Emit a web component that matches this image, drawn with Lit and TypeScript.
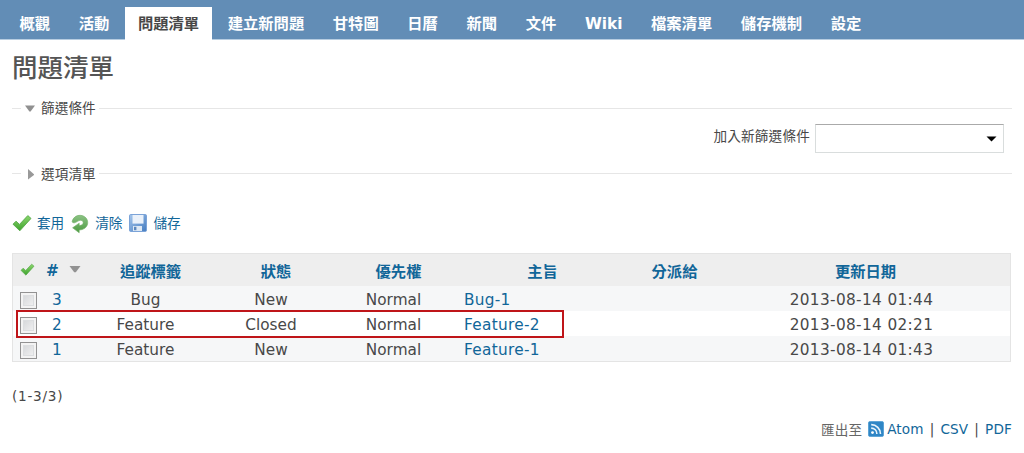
import { LitElement, html, css, svg } from "lit";
import { customElement } from "lit/decorators.js";
import { classMap } from "lit/directives/class-map.js";

interface Issue {
  id: number;
  tracker: string;
  status: string;
  priority: string;
  subject: string;
  updated: string;
}

const TABS = ["概觀", "活動", "問題清單", "建立新問題", "甘特圖", "日曆", "新聞", "文件", "Wiki", "檔案清單", "儲存機制", "設定"];
const ACTIVE_TAB = "問題清單";

const ISSUES: Issue[] = [
  { id: 3, tracker: "Bug", status: "New", priority: "Normal", subject: "Bug-1", updated: "2013-08-14 01:44" },
  { id: 2, tracker: "Feature", status: "Closed", priority: "Normal", subject: "Feature-2", updated: "2013-08-14 02:21" },
  { id: 1, tracker: "Feature", status: "New", priority: "Normal", subject: "Feature-1", updated: "2013-08-14 01:43" },
];

const gradients = svg`
  <defs>
    <linearGradient id="g" x1="0" y1="0" x2="0" y2="1"><stop offset="0" stop-color="#8bd66c"/><stop offset="1" stop-color="#3fa32f"/></linearGradient>
    <linearGradient id="r" x1="0" y1="0" x2="0" y2="1"><stop offset="0" stop-color="#8cc284"/><stop offset="1" stop-color="#4b9a40"/></linearGradient>
    <linearGradient id="b" x1="0" y1="0" x2="1" y2="1"><stop offset="0" stop-color="#a5c6ec"/><stop offset="1" stop-color="#457cc0"/></linearGradient>
  </defs>`;

const checkIcon = html`<svg class="ico" viewBox="0 0 20 18">${gradients}
  <path d="M1 10.2 L4 7.2 L7.5 10.4 L15.8 1.6 L19 4.4 L7.8 16.8 Z" fill="url(#g)" stroke="#55a848" stroke-width=".9" stroke-linejoin="round"/>
</svg>`;

const reloadIcon = html`<svg class="reload" viewBox="0 0 18 20">${gradients}
  <path d="M1.2 7.2 C2.6 2.4 7 .6 11 1.6 C15 2.6 17.2 6 16.6 9.8 C16 13.4 12.6 15.8 8.2 16 L8.2 18.8 L1.6 13.8 L8.2 9.2 L8.2 11.6 C10.6 11.6 12.2 10.4 12.2 8.6 C12.2 6.6 10 5.8 8 6.6 C6.4 7.2 5 8.6 3.4 8.8 C2 8.9 1 8.2 1.2 7.2 Z" fill="url(#r)" stroke="#6bad62" stroke-width=".6" stroke-linejoin="round"/>
</svg>`;

const saveIcon = html`<svg class="save" viewBox="0 0 18 18">${gradients}
  <rect x=".5" y=".5" width="17" height="17" rx="1.3" fill="url(#b)" stroke="#7ba3d8"/>
  <rect x="3.5" y="1" width="11" height="8.6" fill="#eaf1fa"/>
  <rect x="4" y="12" width="9" height="5" fill="#dde8f4"/>
  <rect x="5" y="12.8" width="2.4" height="3.4" fill="#5d88bd"/>
</svg>`;

const feedIcon = html`<svg class="feed" viewBox="0 0 16 16">
  <rect x=".4" y=".4" width="15.2" height="15.2" rx="1.8" fill="#2f86c6" stroke="#4b9ad2" stroke-width=".8"/>
  <circle cx="4.5" cy="11.6" r="1.4" fill="#fff"/>
  <path d="M3.2 7.1 A5.7 5.7 0 0 1 8.9 12.9 M3.2 3.6 A9.3 9.3 0 0 1 12.5 12.9" fill="none" stroke="#e9f4fc" stroke-width="1.6"/>
</svg>`;

@customElement("app-root")
export class AppRoot extends LitElement {
  static styles = css`
    :host {
      display: block;
      height: 453px;
      overflow: hidden;
      background: #fff;
      color: #484848;
      font-family: "DejaVu Sans", "Noto Sans CJK TC", sans-serif;
      font-size: 13.6px;
    }
    * { box-sizing: border-box; }
    a { color: #116699; text-decoration: none; }
    svg { display: block; flex: none; }
    nav {
      display: flex;
      align-items: flex-end;
      gap: 2.6px;
      height: 40px;
      padding-left: 6.5px;
      background: #628db6;
      border-bottom: 1px solid #b7cde1;
    }
    .tab {
      height: 32px;
      padding: 0 13px;
      color: #fff;
      font-size: 15.3px;
      font-weight: 700;
      line-height: 34px;
      white-space: nowrap;
    }
    .tab.on { height: 33px; margin-bottom: -1px; background: #fff; color: #484848; }
    main { padding: 0 12px; }
    h2 {
      margin: 0;
      height: 57px;
      font-size: 25.5px;
      font-weight: 500;
      line-height: 57px;
      color: #555;
    }
    .legend { display: flex; align-items: center; height: 22px; }
    .legend::before { content: ""; width: 9px; height: 1px; background: #e6e6e6; }
    .legend::after { content: ""; flex: 1; height: 1px; margin-left: 3px; background: #e6e6e6; }
    .legend svg { width: 12px; height: 12px; margin: 0 4px 0 3px; }
    .legend span { width: 56px; letter-spacing: .1px; white-space: nowrap; padding-left: 1px; line-height: 22px; height: 22px; }
    .filter { display: flex; justify-content: flex-end; align-items: flex-start; height: 43.5px; padding: 5px 8px 0 0; gap: 5px; }
    .filter span { letter-spacing: .2px; line-height: 25px; }
    .select {
      display: flex;
      align-items: center;
      justify-content: flex-end;
      width: 189px;
      height: 29px;
      padding-right: 6px;
      border: 1px solid #d9dddd;
      border-top-color: #aaa;
    }
    .select svg { width: 11px; height: 6px; }
    .actions { display: flex; align-items: center; height: 22px; margin-top: 27.5px; }
    .actions a { white-space: nowrap; margin-top: -2px; }
    .ico { width: 20px; height: 18px; margin-right: 5px; }
    .reload { width: 18px; height: 20px; margin: 2px 6px 0 7px; }
    .save { width: 18px; height: 18px; margin: -1px 6px 0 7px; }
    .table {
      position: relative;
      width: 999px;
      height: 108.5px;
      margin-top: 19px;
      border: 1px solid #e4e4e4;
      font-size: 15.3px;
    }
    .row {
      display: grid;
      grid-template-columns: 31px 45px 123px 128px 117px 171px 93px 289px;
      align-items: center;
      height: 25px;
      padding-top: 2px;
      background: #f6f7f8;
      text-align: center;
      white-space: nowrap;
    }
    .row.even { background: #fff; }
    .row.head { height: 32px; background: #eee; font-weight: 700; padding: 0 0 1px; }
    .row.head .ico { width: 15px; height: 13px; margin: 0 0 1px 7px; }
    .cell { padding-right: 10px; }
    .id { text-align: left; padding-left: 8px; }
    .subject { text-align: left; padding-left: 7px; letter-spacing: .3px; }
    .updated { letter-spacing: .36px; padding-right: 8px; }
    .sort { display: flex; align-items: center; gap: 10px; padding: 3px 0 0 2px; }
    .sort svg { width: 12px; height: 8px; margin-top: -4px; }
    .box {
      width: 17px;
      height: 17px;
      margin: 1px 0 0 7px;
      border: 1px solid #929292;
      background: linear-gradient(135deg, #d0d2d5, #f6f6f6);
      box-shadow: inset 0 0 0 2px #f3f3f3, inset 0 0 0 3px #dcdee0;
    }
    .mark {
      position: absolute;
      left: 3px;
      top: 56px;
      width: 548px;
      height: 28px;
      border: 2px solid #bf1519;
    }
    .pages { margin-top: 24px; height: 20px; line-height: 20px; letter-spacing: .75px; }
    .export { display: flex; justify-content: flex-end; align-items: center; height: 22px; margin-top: 12px; gap: 6px; letter-spacing: .15px; }
    .feed { width: 16px; height: 16px; margin: 0 -3px 0 0; }
    .label { color: #666; }
  `;

  render() {
    return html`
      <nav>${TABS.map((t) => html`<a class=${classMap({ tab: true, on: t === ACTIVE_TAB })}>${t}</a>`)}</nav>
      <main>
        <h2>問題清單</h2>
        <div class="legend">
          <svg viewBox="0 0 12 12"><path d="M1 3.5H11L6.6 9.5H5.4Z" fill="#909090"/></svg>
          <span>篩選條件</span>
        </div>
        <div class="filter">
          <span>加入新篩選條件</span>
          <div class="select"><svg viewBox="0 0 11 6"><path d="M.5 .5H10.5L5.5 5.5Z" fill="#000"/></svg></div>
        </div>
        <div class="legend">
          <svg viewBox="0 0 12 12"><path d="M4 1L10 6.2V7L4 11.5Z" fill="#999"/></svg>
          <span>選項清單</span>
        </div>
        <div class="actions">
          ${checkIcon}<a>套用</a>${reloadIcon}<a>清除</a>${saveIcon}<a>儲存</a>
        </div>
        <div class="table">
          <div class="row head">
            ${checkIcon}
            <div class="sort"><a>#</a><svg viewBox="0 0 12 8"><path d="M.5 1H11.5L6.8 7.3H5.2Z" fill="#929292"/></svg></div>
            <a>追蹤標籤</a><a>狀態</a><a>優先權</a><a>主旨</a><a>分派給</a><a>更新日期</a>
          </div>
          ${ISSUES.map((i, n) => html`
            <div class=${classMap({ row: true, even: n % 2 === 1 })}>
              <div class="box"></div>
              <a class="id">${i.id}</a>
              <div class="cell">${i.tracker}</div>
              <div class="cell">${i.status}</div>
              <div class="cell">${i.priority}</div>
              <a class="subject">${i.subject}</a>
              <div></div>
              <div class="cell updated">${i.updated}</div>
            </div>`)}
          <div class="mark"></div>
        </div>
        <div class="pages">(1-3/3)</div>
        <div class="export"><span class="label">匯出至</span>${feedIcon}<a>Atom</a><span>|</span><a>CSV</a><span>|</span><a>PDF</a></div>
      </main>
    `;
  }
}
